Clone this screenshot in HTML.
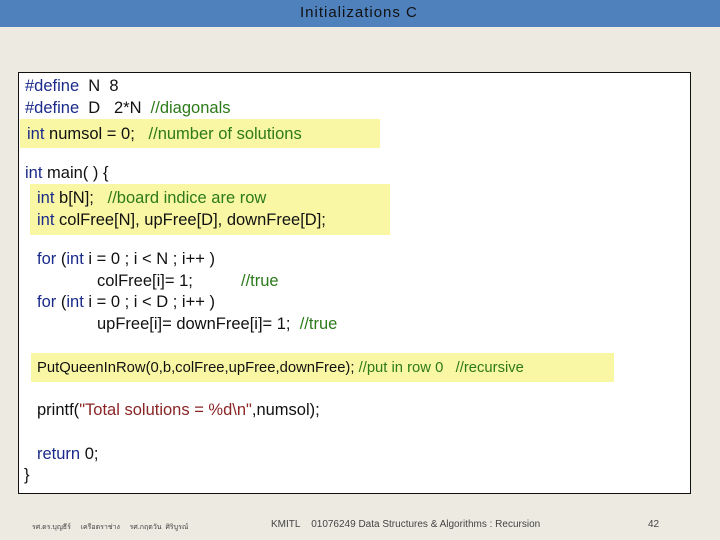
<!DOCTYPE html>
<html><head><meta charset="utf-8"><style>
body{margin:0;width:720px;height:540px;background:#ECEAE1;position:relative;overflow:hidden;font-family:"Liberation Sans",sans-serif;}
.hdr{position:absolute;left:0;top:0;width:720px;height:27px;background:#4F81BD;}
.hdr span{position:absolute;left:300px;top:4px;font-size:15px;letter-spacing:1px;color:#111;font-family:"Liberation Sans",sans-serif;}
.box{position:absolute;left:18px;top:72px;width:671px;height:420px;background:#fff;border:1px solid #111;}
.hl{position:absolute;background:#F9F7A3;}
.l{position:absolute;font-size:16.5px;white-space:pre;color:#111;line-height:18px;}
.k{color:#1a2a8a}.c{color:#2d7a1a}.s{color:#8a2525}
.f{position:absolute;top:519px;font-size:10px;color:#444;white-space:pre;}
</style></head><body>
<div class="hdr"><span>Initializations C</span></div>
<div class="box"></div>
<div class="hl" style="left:20px;top:119px;width:360px;height:29px"></div>
<div class="hl" style="left:30px;top:184px;width:360px;height:51px"></div>
<div class="hl" style="left:31px;top:353px;width:583px;height:29px"></div>
<div class="l" style="left:25px;top:77px"><span class="k">#define</span>  N  8</div>
<div class="l" style="left:25px;top:99px"><span class="k">#define</span>  D   2*N  <span class="c">//diagonals</span></div>
<div class="l" style="left:27px;top:125px"><span class="k">int</span> numsol = 0;   <span class="c">//number of solutions</span></div>
<div class="l" style="left:25px;top:164px"><span class="k">int</span> main( ) {</div>
<div class="l" style="left:37px;top:189px"><span class="k">int</span> b[N];   <span class="c">//board indice are row</span></div>
<div class="l" style="left:37px;top:211px"><span class="k">int</span> colFree[N], upFree[D], downFree[D];</div>
<div class="l" style="left:37px;top:250px"><span class="k">for</span> (<span class="k">int</span> i = 0 ; i &lt; N ; i++ )</div>
<div class="l" style="left:97px;top:272px">colFree[i]= 1;</div>
<div class="l" style="left:241px;top:272px"><span class="c">//true</span></div>
<div class="l" style="left:37px;top:293px"><span class="k">for</span> (<span class="k">int</span> i = 0 ; i &lt; D ; i++ )</div>
<div class="l" style="left:97px;top:315px">upFree[i]= downFree[i]= 1;  <span class="c">//true</span></div>
<div class="l" style="left:37px;top:359px;font-size:14.8px">PutQueenInRow(0,b,colFree,upFree,downFree); <span class="c">//put in row 0   //recursive</span></div>
<div class="l" style="left:37px;top:401px">printf(<span class="s">"Total solutions = %d\n"</span>,numsol);</div>
<div class="l" style="left:37px;top:445px"><span class="k">return</span> 0;</div>
<div class="l" style="left:24px;top:466px">}</div>
<div class="f" style="left:32px;font-size:7px;top:522px">รศ.ดร.บุญธีร์     เครือตราช่าง     รศ.กฤตวัน  ศิริบูรณ์</div>
<div class="f" style="left:271px">KMITL    01076249 Data Structures &amp; Algorithms : Recursion</div>
<div class="f" style="left:648px">42</div>
</body></html>
